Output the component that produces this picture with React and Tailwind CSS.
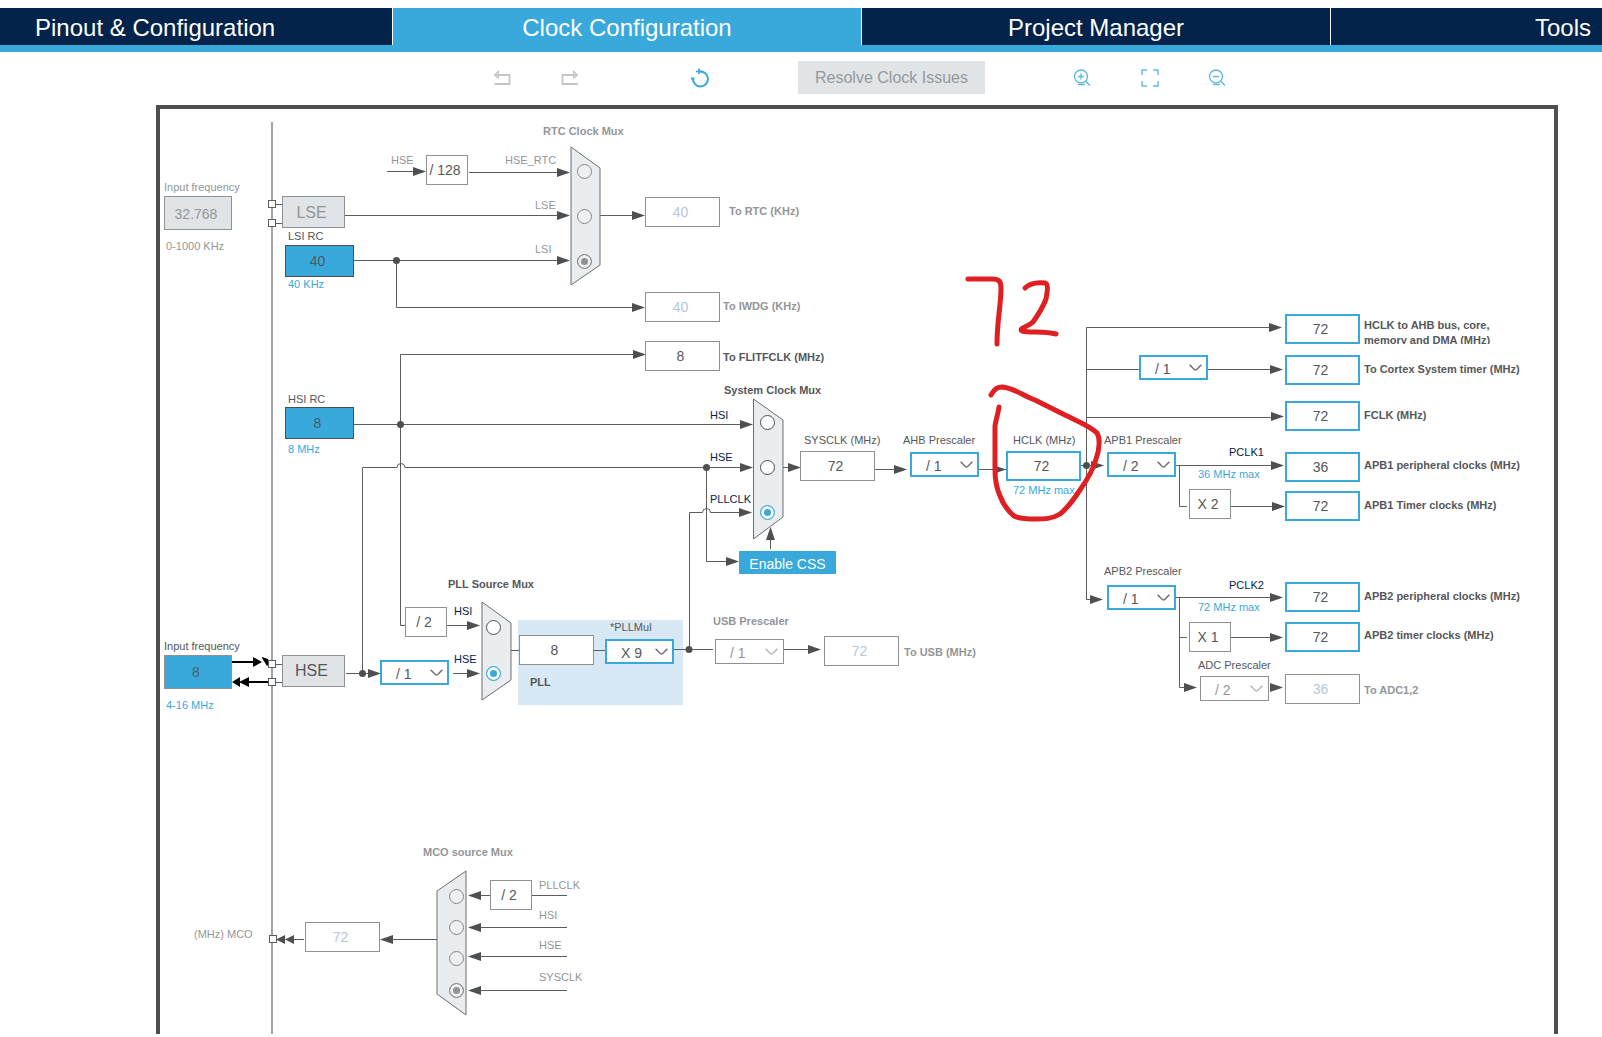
import React, { useState } from "react";

/* The canvas's top-left corner in diagram coordinates. */
const ORIGIN = { x: 160, y: 109 };
const at = (x, y) => ({ left: x - ORIGIN.x, top: y - ORIGIN.y });

const tabs = [
  { title: "Pinout & Configuration", look: "bg-[#03234b] pl-[35px] text-left" },
  { title: "Clock Configuration", look: "bg-[#39a9dc] text-center", current: true },
  { title: "Project Manager", look: "bg-[#03234b] text-center" },
  { title: "Tools", look: "bg-[#03234b] pr-[11px] text-right" },
];

const wires = [
  // RTC section
  "M387 171.5H416", "M469 172.5H560", "M345 215.5H560", "M354 260.5H560",
  "M600 215.5H635", "M396.5 260.5V307.5H635",
  // HSI
  "M400.5 354.5H637", "M354 424.5H742", "M400.5 354.5V625.5H405",
  "M447 625.5H470",
  // HSE
  "M346 673.5H372", "M453 673.5H470",
  "M362.5 673V467.5H397A4 4 0 0 1 405 467.5H742",
  // CSS and PLL clock
  "M706.5 467.5V561.5H728", "M770.5 549V538",
  "M511 650.5H519", "M594 650.5H605", "M674 649.5H713", "M784 649.5H810",
  "M689.5 649.5V512.5H702.5A4 4 0 0 1 710.5 512.5H742",
  // SYSCLK to HCLK
  "M783 467.5H792", "M875 469.5H896", "M979 469.5H1006", "M1081 465.5H1096",
  // HCLK outputs
  "M1086.5 599.5V327.5H1272", "M1086.5 369.5H1139", "M1208 369.5H1272",
  "M1086.5 417.5H1273", "M1176 465.5H1273", "M1179.5 465.5V506.5H1187",
  "M1231 506.5H1274", "M1086.5 599.5H1093",
  "M1176 597.5H1273", "M1179.5 597.5V687.5H1187", "M1179.5 637.5H1187",
  "M1231 637.5H1273",
  // MCO
  "M437 939.5H390", "M304 939.5H290",
  "M478 895.5H490", "M532 895.5H567", "M478 927.5H567", "M478 956.5H567", "M478 990.5H567",
  // Pin connectors
  "M276 204.5H282", "M276 223.5H282", "M276 664.5H282", "M276 682.5H282",
];

const heads = [
  [426, 171.5], [570, 172.5], [570, 215.5], [570, 260.5], [645, 215.5], [645, 307.5],
  [646, 354.5], [753, 424.5], [753, 467.5], [752, 512.5], [739, 561.5], [480, 625.5],
  [480, 673.5], [381, 673.5], [801, 467.5], [907, 469.5], [1006, 469.5], [1104, 465.5],
  [1282, 327.5], [1283, 369.5], [1284, 416.5], [1284, 465.5], [1285, 506.5],
  [1103, 599.5], [1283, 597.5], [1283, 637.5], [1197, 687.5], [1283, 687.5], [821, 649.5],
];
const headsLeft = [
  [380, 939.5], [468, 895.5], [468, 927.5], [468, 956.5], [468, 990.5],
];
const dots = [
  [396.5, 260.5], [400.5, 424.5], [706.5, 467.5], [362.5, 673.5], [689, 649.5], [1086.5, 465.5],
];
const pins = [[272, 204], [272, 223], [272, 664], [272, 682], [273, 939]];

const muxes = [
  "571,147 600,168 600,265 571,285",
  "753.5,399 783,420 783,517 753.5,539",
  "482,602 511,623 511,680 482,700",
  "466,871 437,891 437,994 466,1015",
];

const radioLook = {
  on: "border-[#4d4f50] bg-white checked:border-[#39a9dc] checked:bg-[#39a9dc] checked:shadow-[inset_0_0_0_3px_#ffffff]",
  off: "border-[#85888b] bg-[#eef1f3] checked:bg-[#8f9294] checked:shadow-[inset_0_0_0_3px_#eef1f3]",
};
const radioGroups = [
  { name: "RTC Clock Mux", look: "off", value: "LSI", items: [["HSE_RTC", 584, 171], ["LSE", 584, 216], ["LSI", 584, 261]] },
  { name: "System Clock Mux", look: "on", value: "PLLCLK", items: [["HSI", 767, 422], ["HSE", 767, 467], ["PLLCLK", 767, 512]] },
  { name: "PLL Source Mux", look: "on", value: "HSE", items: [["HSI", 493, 627], ["HSE", 493, 673]] },
  { name: "MCO source Mux", look: "off", value: "SYSCLK", items: [["PLLCLK", 456, 896], ["HSI", 456, 927], ["HSE", 456, 958], ["SYSCLK", 456, 990]] },
];

const tone = {
  dark: "text-[#55575a]",
  gray: "text-[#939698]",
  blue: "text-[#39a9dc]",
  navy: "text-[#03234b]",
  darkBold: "font-bold text-[#55575a]",
  grayBold: "font-bold text-[#939698]",
};

/* [text, x, centre y, tone, id of the labelled field] */
const labels = [
  ["Input frequency", 164, 187, "gray", "lse-in"], ["0-1000 KHz", 166, 246, "gray"],
  ["LSI RC", 288, 236, "dark", "lsi"], ["40 KHz", 288, 284, "blue"],
  ["HSE", 391, 160, "gray"], ["HSE_RTC", 505, 160, "gray"], ["LSE", 535, 205, "gray"], ["LSI", 535, 249, "gray"],
  ["RTC Clock Mux", 543, 131, "grayBold"],
  ["To RTC (KHz)", 729, 211, "grayBold", "rtc"], ["To IWDG (KHz)", 723, 306, "grayBold", "iwdg"],
  ["To FLITFCLK (MHz)", 723, 357, "darkBold", "flitf"],
  ["HSI RC", 288, 399, "dark", "hsi"], ["8 MHz", 288, 449, "blue"],
  ["System Clock Mux", 724, 390, "darkBold"],
  ["HSI", 710, 415, "navy"], ["HSE", 710, 457, "navy"], ["PLLCLK", 710, 499, "navy"],
  ["SYSCLK (MHz)", 804, 440, "dark", "sysclk"], ["AHB Prescaler", 903, 440, "dark", "ahb"],
  ["HCLK (MHz)", 1013, 440, "dark", "hclk"], ["72 MHz max", 1013, 490, "blue"],
  ["APB1 Prescaler", 1104, 440, "dark", "apb1"], ["PCLK1", 1229, 452, "navy"], ["36 MHz max", 1198, 474, "blue"],
  ["APB2 Prescaler", 1104, 571, "dark", "apb2"], ["PCLK2", 1229, 585, "navy"], ["72 MHz max", 1198, 607, "blue"],
  ["ADC Prescaler", 1198, 665, "dark", "adc"],
  ["To Cortex System timer (MHz)", 1364, 369, "darkBold", "cortex-out"],
  ["FCLK (MHz)", 1364, 415, "darkBold", "fclk"],
  ["APB1 peripheral clocks (MHz)", 1364, 465, "darkBold", "apb1-p"],
  ["APB1 Timer clocks (MHz)", 1364, 505, "darkBold", "apb1-t"],
  ["APB2 peripheral clocks (MHz)", 1364, 596, "darkBold", "apb2-p"],
  ["APB2 timer clocks (MHz)", 1364, 635, "darkBold", "apb2-t"],
  ["To ADC1,2", 1364, 690, "grayBold", "adc-out"],
  ["Input frequency", 164, 646, "dark", "hse-in"], ["4-16 MHz", 166, 705, "blue"],
  ["PLL Source Mux", 448, 584, "darkBold"], ["HSI", 454, 611, "navy"], ["HSE", 454, 659, "navy"],
  ["*PLLMul", 610, 627, "dark", "pllmul"], ["PLL", 530, 682, "darkBold", "pll"],
  ["USB Prescaler", 713, 621, "grayBold", "usb"], ["To USB (MHz)", 904, 652, "grayBold", "usb-out"],
  ["MCO source Mux", 423, 852, "grayBold"], ["(MHz) MCO", 194, 934, "gray", "mco"],
  ["PLLCLK", 539, 885, "gray"], ["HSI", 539, 915, "gray"], ["HSE", 539, 945, "gray"], ["SYSCLK", 539, 977, "gray"],
];

const fieldLook = {
  active: "h-[30px] w-[75px] border-2 border-[#39a9dc] bg-white pr-1 text-[#55575a]",
  plain: "h-[30px] w-[75px] border border-[#8f9294] bg-white pr-1 text-[#55575a]",
  off: "h-[30px] w-[75px] border border-[#8f9294] bg-white pr-1 text-[#b4c7dc]",
  source: "h-[32px] w-[69px] border border-[#4d4f50] bg-[#39a9dc] pr-1 text-[#4d5a64]",
  input: "h-[34px] w-[68px] border border-[#8f9294] bg-[#39a9dc] pr-1 text-[#4d5a64]",
  inputOff: "h-[34px] w-[68px] border border-[#8f9294] bg-[#e0e4e7] pt-0.5 pr-1 text-[#939698]",
};

/* [id, value, x, y, look] */
const fields = [
  ["lse-in", "32.768", 164, 196, "inputOff"], ["lsi", "40", 285, 245, "source"],
  ["hsi", "8", 285, 407, "source"], ["hse-in", "8", 164, 655, "input"],
  ["rtc", "40", 645, 197, "off"], ["iwdg", "40", 645, 292, "off"], ["flitf", "8", 645, 341, "plain"],
  ["sysclk", "72", 800, 451, "plain"], ["hclk", "72", 1006, 451, "active"],
  ["ahb-out", "72", 1285, 314, "active"], ["cortex-out", "72", 1285, 355, "active"], ["fclk", "72", 1285, 401, "active"],
  ["apb1-p", "36", 1285, 452, "active"], ["apb1-t", "72", 1285, 491, "active"],
  ["apb2-p", "72", 1285, 582, "active"], ["apb2-t", "72", 1285, 622, "active"], ["adc-out", "36", 1285, 674, "off"],
  ["pll", "8", 519, 635, "plain"], ["usb-out", "72", 824, 636, "off"], ["mco", "72", 305, 922, "off"],
];

/* [text, x, y] of the fixed dividers and multipliers */
const factors = [
  ["/ 128", 426, 155], ["/ 2", 405, 607], ["X 2", 1189, 489], ["X 1", 1189, 622], ["/ 2", 490, 880],
];

const selectLook = {
  on: "border-2 border-[#39a9dc] bg-white pl-[14px] text-[#55575a]",
  off: "border border-[#8f9294] bg-white pl-[14px] text-[#939698]",
};

/* [id, value, x, y, look] */
const selects = [
  ["hse-div", "/ 1", 380, 660, "on"], ["pllmul", "X 9", 605, 639, "on"], ["usb", "/ 1", 715, 639, "off"],
  ["ahb", "/ 1", 910, 452, "on"], ["cortex", "/ 1", 1139, 355, "on"], ["apb1", "/ 2", 1107, 452, "on"],
  ["apb2", "/ 1", 1107, 585, "on"], ["adc", "/ 2", 1200, 676, "off"],
];
const divisors = ["/ 1", "/ 2", "/ 4", "/ 8", "/ 16"];
const multipliers = ["X 2", "X 4", "X 6", "X 8", "X 9"];

function Wires() {
  return (
    <svg className="absolute top-0 left-0 h-[925px] w-[1394px]" viewBox="160 109 1394 925" aria-hidden="true">
      <path d="M272 122V1034" stroke="#a0a2a4" strokeWidth="2" />
      <g fill="none" stroke="#5b5d5f">
        {wires.map((d) => <path key={d} d={d} />)}
      </g>
      <g fill="#4d4f50">
        {heads.map(([x, y]) => <path key={`${x} ${y}`} d={`M${x} ${y}l-13 -4.500v9z`} />)}
        {headsLeft.map(([x, y]) => <path key={`${x} ${y}`} d={`M${x} ${y}l13 -4.500v9z`} />)}
        <path d="M770.5 527l-4.500 13h9z" />
        <path d="M276 939.5l9 -4.500v9zM285 939.5l9 -4.500v9z" />
        {dots.map(([x, y]) => <circle key={x} cx={x} cy={y} r="3.500" />)}
      </g>
      <g fill="#000000" stroke="#000000">
        <path d="M232 662H256M246 682H268" strokeWidth="2" />
        <path d="M262 662l-9 -5v10zM268 659v6l-1 1l-5 -8v-1zM232 682l8 -5v10zM239 682l10 -5v10z" strokeWidth="0" />
      </g>
      <g fill="#ffffff" stroke="#5b5d5f">
        {pins.map(([x, y]) => <rect key={y} x={x - 3.5} y={y - 3.5} width="7" height="7" />)}
      </g>
      <g fill="#e9edf0" stroke="#6b6e70">
        {muxes.map((points) => <polygon key={points} points={points} />)}
      </g>
    </svg>
  );
}

function Annotation() {
  return (
    <svg
      className="pointer-events-none absolute top-0 left-0 h-[925px] w-[1394px]"
      viewBox="160 109 1394 925"
      fill="none"
      stroke="#df1f21"
      strokeWidth="5"
      strokeLinecap="round"
      strokeLinejoin="round"
      aria-hidden="true"
    >
      <path d="M968 279H992C999 279 1001 281 1001 288C1001 306 997 320 997 344" />
      <path d="M1025 288C1030 283 1037 282 1045 283C1049 284 1047 293 1046 299C1043 307 1038 315 1033 322C1028 327 1018 328 1022 331C1030 333 1044 331 1056 334" />
      <path d="M991 395C995 388 998 387 1002 387C1014 388 1022 395 1035 400L1063 414C1077 421 1090 426 1097 433C1100 438 1100 448 1096 459C1093 471 1087 480 1080 490C1074 499 1068 508 1060 514C1052 519 1044 519 1036 519C1028 519 1020 519 1014 516C1008 511 1003 504 1000 496C996 487 995 480 995 470V426C996 419 998 414 999 407" />
    </svg>
  );
}

function Toolbar() {
  const icon = "h-[18px] w-[18px]";
  return (
    <div className="flex h-[53px] items-center pb-0.5 pl-[493px]" role="toolbar">
      <button type="button" aria-label="Undo" className="mr-[49px] text-[#c4c6c8]">
        <svg className={icon} viewBox="0 0 18 18" fill="none" stroke="currentColor" strokeWidth="1.800">
          <path d="M2 6H16.500V15H1.500" />
          <path d="M5.500 1.500V9M5.500 2L1.500 6l4 3.500" strokeWidth="1.200" />
        </svg>
      </button>
      <button type="button" aria-label="Redo" className="mr-[113px] text-[#c4c6c8]">
        <svg className={icon} viewBox="0 0 18 18" fill="none" stroke="currentColor" strokeWidth="1.800">
          <path d="M17 6H2.500V15H18" />
          <path d="M13.500 1.500V9M13.500 2L17.500 6l-4 3.500" strokeWidth="1.200" />
        </svg>
      </button>
      <button type="button" aria-label="Reset" className="mr-[89px] text-[#39a9dc]">
        <svg className="h-5 w-[18px]" viewBox="0 0 18 20" fill="none" stroke="currentColor" strokeWidth="2">
          <path d="M9 3.500A7.500 7.500 0 1 1 2 10.500" />
          <path d="M5 3.500H12M8 0.500V6" strokeWidth="1.700" />
          <path d="M0 10.500H3.500" />
        </svg>
      </button>
      <button type="button" disabled className="mr-[88px] h-[33px] w-[187px] bg-[#e0e4e7] text-base text-[#94999c]">
        Resolve Clock Issues
      </button>
      <button type="button" aria-label="Zoom in" className="mr-[50px] text-[#5fbbe4]">
        <svg className={icon} viewBox="0 0 18 18" fill="none" stroke="currentColor" strokeWidth="1.400">
          <circle cx="8" cy="7.500" r="6.500" />
          <path d="M5 7.500H11M8 4.500V10.500M12.500 12L17 16.500M5 15.500H12" />
        </svg>
      </button>
      <button type="button" aria-label="Fit to window" className="mr-[49px] text-[#5fbbe4]">
        <svg className={icon} viewBox="0 0 18 18" fill="none" stroke="currentColor" strokeWidth="1.400">
          <path d="M1 6V1H6M12 1H17V6M17 12V17H12M6 17H1V12" />
        </svg>
      </button>
      <button type="button" aria-label="Zoom out" className="text-[#5fbbe4]">
        <svg className={icon} viewBox="0 0 18 18" fill="none" stroke="currentColor" strokeWidth="1.400">
          <circle cx="8" cy="7.500" r="6.500" />
          <path d="M5 7.500H11M12.500 12L17 16.500M5 15.500H12" />
        </svg>
      </button>
    </div>
  );
}

function Radios({ group }) {
  const [value, setValue] = useState(group.value);
  return group.items.map(([item, x, y]) => (
    <input
      key={item}
      type="radio"
      name={group.name}
      aria-label={`${group.name}: ${item}`}
      checked={value === item}
      onChange={() => setValue(item)}
      className={`absolute h-[15px] w-[15px] appearance-none rounded-full border ${radioLook[group.look]}`}
      style={at(x - 7, y - 7)}
    />
  ));
}

function Prescaler({ id, initial, x, y, look }) {
  const options = id === "pllmul" ? multipliers : divisors;
  return (
    <div className="absolute" style={at(x, y)}>
      <select
        id={id}
        aria-label={id}
        defaultValue={initial}
        className={`block h-[25px] w-[69px] appearance-none pt-0.5 text-sm leading-5 ${selectLook[look]}`}
      >
        {options.map((o) => <option key={o}>{o}</option>)}
      </select>
      <svg
        className={`pointer-events-none absolute top-[9px] right-[6px] h-[8px] w-[13px] ${look === "on" ? "text-[#6b6e70]" : "text-[#b4b6b8]"}`}
        viewBox="0 0 13 8"
        fill="none"
        stroke="currentColor"
        strokeWidth="1.300"
      >
        <path d="M0.500 1C2.500 1.500 4.500 6 6.500 6S10.500 1.500 12.500 1" />
      </svg>
    </div>
  );
}

export default function App() {
  return (
    <div className="min-h-screen overflow-x-hidden bg-white pt-2 font-['Liberation_Sans',Arial,sans-serif]">
      <nav className="grid h-11 grid-cols-[393fr_469fr_469fr_271fr] border-b-[7px] border-[#39a9dc] bg-[#39a9dc]">
        {tabs.map((tab) => (
          <button
            key={tab.title}
            type="button"
            aria-current={tab.current ? "page" : undefined}
            className={`border-r border-white pt-0.5 text-2xl whitespace-nowrap text-white last:border-r-0 ${tab.look}`}
          >
            {tab.title}
          </button>
        ))}
      </nav>

      <Toolbar />

      <main className="mr-11 ml-[156px] border-4 border-b-0 border-[#4d4f50]">
        <div className="relative h-[925px] overflow-hidden">
          <div className="absolute h-[85px] w-[165px] bg-[#d8e8f5]" style={at(518, 620)} />
          <Wires />

          {labels.map(([text, x, y, look, id]) => {
            const Tag = id ? "label" : "span";
            return (
              <Tag
                key={`${text} ${x} ${y}`}
                htmlFor={id}
                className={`absolute text-[11px] leading-4 whitespace-nowrap ${tone[look]}`}
                style={at(x, y - 8)}
              >
                {text}
              </Tag>
            );
          })}
          <label
            htmlFor="ahb-out"
            className="absolute h-[26px] w-[140px] overflow-hidden text-[11px] leading-[15px] font-bold text-[#55575a]"
            style={at(1364, 318)}
          >
            HCLK to AHB bus, core,
            <br />
            memory and DMA (MHz)
          </label>

          {fields.map(([id, value, x, y, look]) => (
            <input
              key={id}
              id={id}
              type="text"
              defaultValue={value}
              className={`absolute text-center text-sm ${fieldLook[look]}`}
              style={at(x, y)}
            />
          ))}

          {factors.map(([text, x, y]) => (
            <div
              key={`${x} ${y}`}
              className="absolute flex h-[30px] w-[42px] items-center justify-center border border-[#8f9294] bg-white pr-1 text-sm whitespace-nowrap text-[#55575a]"
              style={at(x, y)}
            >
              {text}
            </div>
          ))}

          {selects.map(([id, value, x, y, look]) => (
            <Prescaler key={id} id={id} initial={value} x={x} y={y} look={look} />
          ))}

          <button
            type="button"
            disabled
            className="absolute h-[32px] w-[63px] border border-[#8f9294] bg-[#e0e4e7] pt-0.5 pr-1 text-base text-[#939698]"
            style={at(282, 196)}
          >
            LSE
          </button>
          <button
            type="button"
            className="absolute h-[32px] w-[63px] border border-[#8f9294] bg-[#e0e4e7] pr-1 text-base text-[#55575a]"
            style={at(282, 655)}
          >
            HSE
          </button>
          <button
            type="button"
            className="absolute h-[23px] w-[97px] bg-[#39a9dc] pt-0.5 text-sm text-white"
            style={at(739, 551)}
          >
            Enable CSS
          </button>

          {radioGroups.map((group) => <Radios key={group.name} group={group} />)}

          <Annotation />
        </div>
      </main>
    </div>
  );
}
